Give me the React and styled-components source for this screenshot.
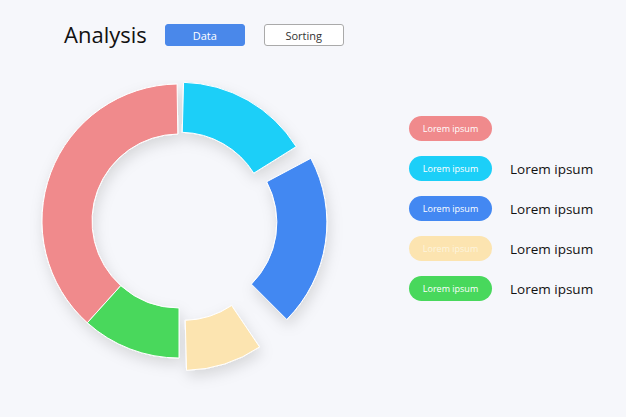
import React from 'react';
import styled, { createGlobalStyle } from 'styled-components';

const Global = createGlobalStyle`
  html, body { margin: 0; background: #f6f7fb; }
  body { font-family: "Open Sans", "Liberation Sans", sans-serif; }
`;

const Page = styled.div`
  width: 626px;
  height: 417px;
  background: #f6f7fb;
  overflow: hidden;
`;

const Header = styled.div`
  display: flex;
  align-items: center;
  padding: 20px 0 0 64px;
  height: 30px;
`;

const Title = styled.h1`
  margin: -3px 18px 0 0;
  font-size: 22px;
  font-weight: 400;
  color: #111;
`;

const Tab = styled.div`
  width: 80px;
  height: 22px;
  box-sizing: border-box;
  margin-right: 19px;
  border-radius: 3px;
  display: flex;
  align-items: center;
  justify-content: center;
  font-size: 11px;
  color: ${p => (p.$active ? '#fff' : '#333')};
  background: ${p => (p.$active ? '#4a88ea' : '#fff')};
  border: 1px solid ${p => (p.$active ? '#4a88ea' : '#aaa')};
`;

const Main = styled.div`
  display: flex;
  margin-top: 30px;
`;

const Chart = styled.svg`
  margin-left: 20px;
  flex: none;
`;

const Legend = styled.div`
  display: flex;
  flex-direction: column;
  gap: 15px;
  margin: 36px 0 0 49px;
`;

const Row = styled.div`
  display: flex;
  align-items: center;
  height: 25px;
`;

const Pill = styled.div`
  width: 83px;
  height: 25px;
  border-radius: 13px;
  background: ${p => p.$color};
  color: ${p => p.$text || '#fff'};
  font-size: 9px;
  display: flex;
  align-items: center;
  justify-content: center;
`;

const Label = styled.span`
  margin-left: 18px;
  font-size: 13.5px;
  color: #111;
`;

const cx = 159, cy = 141, R = 137, r = 87;
const pt = (rad, deg, ox, oy) => {
  const a = (deg * Math.PI) / 180;
  return `${(cx + ox + rad * Math.sin(a)).toFixed(2)} ${(cy + oy - rad * Math.cos(a)).toFixed(2)}`;
};
const arc = (a0, a1, off) => {
  const mid = ((a0 + a1) / 2) * Math.PI / 180;
  const ox = off * Math.sin(mid), oy = -off * Math.cos(mid);
  const large = a1 - a0 > 180 ? 1 : 0;
  return `M${pt(R, a0, ox, oy)} A${R} ${R} 0 ${large} 1 ${pt(R, a1, ox, oy)} L${pt(r, a1, ox, oy)} A${r} ${r} 0 ${large} 0 ${pt(r, a0, ox, oy)} Z`;
};

const segments = [
  { a: [222, 359.2], off: 0, c: '#f08a8c' },
  { a: [180, 222], off: 0, c: '#48d85c' },
  { a: [1.5, 58], off: 2, c: '#1ccff8' },
  { a: [62, 135], off: 11, c: '#4388f2' },
  { a: [146, 178.5], off: 13, c: '#fce4b0' },
];

const legend = [
  { c: '#f08a8c' },
  { c: '#1ccff8', label: true },
  { c: '#4388f2', label: true },
  { c: '#fce4b0', t: '#fdf4de', label: true },
  { c: '#48d85c', label: true },
];

export default function App() {
  return (
    <Page>
      <Global />
      <Header>
        <Title>Analysis</Title>
        <Tab $active>Data</Tab>
        <Tab>Sorting</Tab>
      </Header>
      <Main>
        <Chart width="340" height="330" viewBox="0 0 340 330">
          <defs>
            <filter id="sh" x="-20%" y="-20%" width="140%" height="140%">
              <feDropShadow dx="2" dy="6" stdDeviation="7" floodColor="#000" floodOpacity="0.13" />
            </filter>
          </defs>
          <g filter="url(#sh)">
            {segments.map((s, i) => (
              <path key={i} d={arc(s.a[0], s.a[1], s.off)} fill={s.c} stroke="#fff" strokeWidth="1" />
            ))}
          </g>
        </Chart>
        <Legend>
          {legend.map((l, i) => (
            <Row key={i}>
              <Pill $color={l.c} $text={l.t}>Lorem ipsum</Pill>
              {l.label && <Label>Lorem ipsum</Label>}
            </Row>
          ))}
        </Legend>
      </Main>
    </Page>
  );
}
